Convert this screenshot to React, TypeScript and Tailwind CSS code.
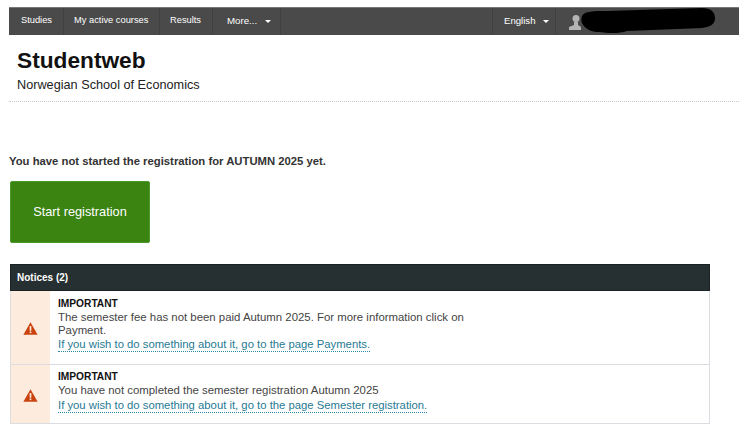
const font = { fontFamily: '"Liberation Sans", Arial, sans-serif' };

function Caret() {
  return <span className="ml-[8px] mt-[1px] h-0 w-0 border-x-[3px] border-t-[3px] border-x-transparent border-t-white" />;
}

function Warning() {
  return (
    <svg viewBox="0 0 16 14" className="h-[13px] w-[15px]">
      <path d="M8 0.3 L15.7 13.7 H0.3 Z" fill="#c9430f" />
      <rect x="7.1" y="4.4" width="1.8" height="5" fill="#fdebdd" />
      <rect x="7.1" y="10.2" width="1.8" height="1.8" fill="#fdebdd" />
    </svg>
  );
}

const navItem = "flex h-full items-center border-r border-[#404040] pb-[1px]";

function Notice({ lines, link, rowClass, textClass }: { lines: string[]; link: string; rowClass: string; textClass: string }) {
  return (
    <div className={`flex ${rowClass}`}>
      <div className="flex w-[39px] shrink-0 items-center justify-center bg-[#fdebdd] pt-[2px]">
        <Warning />
      </div>
      <div className={`pl-[8px] text-[11.4px] leading-[12.5px] text-[#444] ${textClass}`}>
        <div className="text-[10.2px] font-bold leading-[14px] text-[#111]">IMPORTANT</div>
        <div className="w-[420px]">
          {lines.map((l) => (
            <div key={l}>{l}</div>
          ))}
        </div>
        <a className="mt-[2px] inline-block border-b border-dotted border-[#2a8aa5] text-[11.3px] leading-[13px] text-[#1f7a94]">{link}</a>
      </div>
    </div>
  );
}

export default function App() {
  return (
    <div style={font} className="h-[429px] w-[750px] overflow-hidden bg-white">
      <div className="pl-[9px] pr-[11px] pt-[7px]">
        <nav className="flex h-[28px] items-center justify-between border-t border-[#777] bg-[#4a4a4a] text-[9.3px] text-white">
          <div className="flex h-full">
            <div className={`${navItem} w-[55px] pl-[12px]`}>Studies</div>
            <div className={`${navItem} w-[96px] pl-[10px]`}>My active courses</div>
            <div className={`${navItem} w-[53px] pl-[10px]`}>Results</div>
            <div className={`${navItem} w-[68px] pl-[14px]`}>
              <span className="text-[9.7px]">More...</span>
              <Caret />
            </div>
          </div>
          <div className="flex h-full">
            <div className={`${navItem} w-[64px] border-l pl-[11px]`}>
              <span className="text-[9.6px]">English</span>
              <Caret />
            </div>
            <div className="relative flex h-full w-[183px] items-center pl-[12px]">
              <svg viewBox="0 0 14 16" className="h-[16px] w-[14px]">
                <circle cx="8" cy="4.5" r="3.5" fill="#b5b5b5" />
                <path d="M6 8 H10 L10 11 L13 13 V16 H1 V13 L6 11 Z" fill="#b5b5b5" />
              </svg>
              <svg viewBox="0 0 140 26" className="absolute left-[21px] top-[0px] h-[26px] w-[140px]">
                <path d="M5 8 C8 3 16 3 30 3 L125 0 C134 0 138 4 138 10 C138 17 132 19 125 20 L50 23 C42 26 30 25 22 24 C10 24 2 16 5 8 Z" fill="#000" />
              </svg>
            </div>
          </div>
        </nav>
        <header className="h-[67px] border-b border-dotted border-[#ccc] pl-[8px] pt-[11px]">
          <h1 className="text-[22.7px] font-bold leading-[28px] text-[#111]">Studentweb</h1>
          <p className="mt-[3px] text-[12.7px] leading-[16px] text-[#222]">Norwegian School of Economics</p>
        </header>
        <p className="mt-[52px] text-[11.3px] font-bold leading-[14px] text-[#333]">
          You have not started the registration for AUTUMN 2025 yet.
        </p>
        <button className="ml-px mt-[13px] flex h-[62px] w-[140px] items-center justify-center rounded-[2px] border border-[#4a9a2a] bg-[#3b8412] text-[12.75px] text-white">
          Start registration
        </button>
        <section className="ml-px mt-[21px] w-[700px]">
          <div className="flex h-[27px] items-center border border-[#1a2224] bg-[#262f31] pl-[6px] text-[10px] font-bold text-white">
            Notices (2)
          </div>
          <div className="border-x border-b border-[#dcdde3]">
            <Notice
              rowClass="h-[74px] border-b border-[#dcdde3]"
              textClass="pt-[6px]"
              lines={["The semester fee has not been paid Autumn 2025. For more information click on", "Payment."]}
              link="If you wish to do something about it, go to the page Payments."
            />
            <Notice
              rowClass="h-[58px]"
              textClass="pt-[5px]"
              lines={["You have not completed the semester registration Autumn 2025"]}
              link="If you wish to do something about it, go to the page Semester registration."
            />
          </div>
        </section>
      </div>
    </div>
  );
}
